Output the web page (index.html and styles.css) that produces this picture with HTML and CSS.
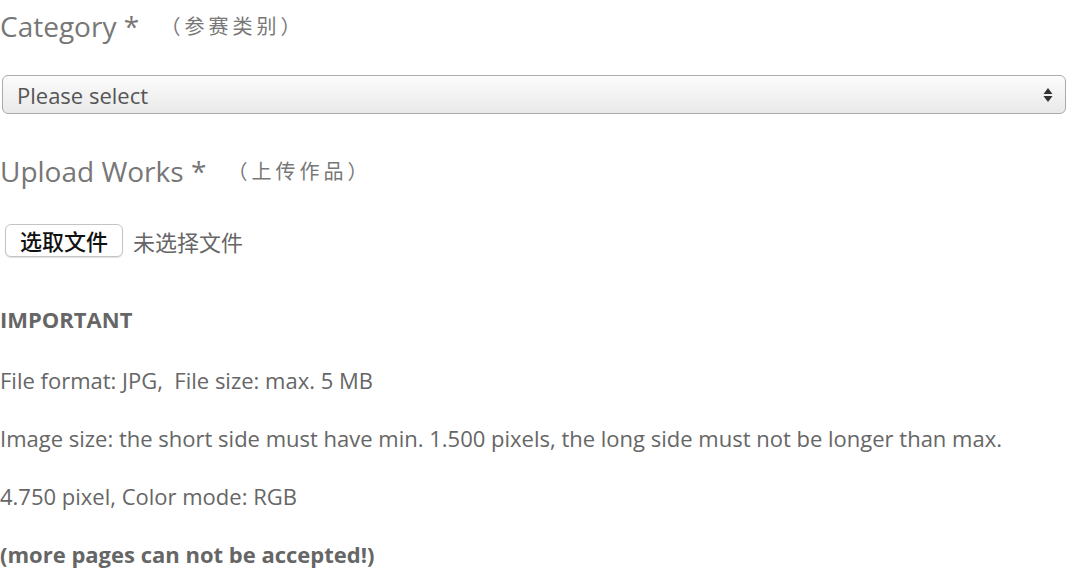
FILE: index.html
```html
<!DOCTYPE html>
<html lang="en">
<head>
<meta charset="utf-8">
<link rel="stylesheet" href="styles.css">
</head>
<body>
<form class="form">
  <div class="label">Category * <span class="cn">（参赛类别）</span></div>
  <div class="select">
    <span class="select-text">Please select</span>
    <svg class="arrows" width="10" height="16" viewBox="0 0 10 16"><path d="M5 1 L9.5 7 H0.5 Z M5 15 L9.5 9 H0.5 Z" fill="#333"/></svg>
  </div>
  <div class="label label-upload">Upload Works * <span class="cn">（上传作品）</span></div>
  <div class="file">
    <span class="file-btn">选取文件</span>
    <span class="file-none">未选择文件</span>
  </div>
  <p class="strong first">IMPORTANT</p>
  <p class="text">File format: JPG,&nbsp; File size: max. 5 MB</p>
  <p class="text">Image size: the short side must have min. 1.500 pixels, the long side must not be longer than max.</p>
  <p class="text">4.750 pixel, Color mode: RGB</p>
  <p class="strong">(more pages can not be accepted!)</p>
</form>
</body>
</html>
```
FILE: styles.css
```css
html, body {
  margin: 0;
  padding: 0;
  background: #fff;
}
body {
  font-family: "Open Sans", "Noto Sans CJK SC", sans-serif;
  color: #666;
}
.form {
  display: flex;
  flex-direction: column;
}
.label {
  font-size: 28px;
  line-height: 40px;
  color: #777;
  padding-top: 6px;
}
.cn {
  font-size: 20px;
  letter-spacing: 4px;
  color: #777;
  margin-left: 14px;
  vertical-align: 3px;
}
.select {
  box-sizing: border-box;
  margin: 28px 14px 0 2px;
  height: 39px;
  border: 1px solid #aaa;
  border-radius: 6px;
  background: linear-gradient(#fcfcfc, #e9e9e9);
  display: flex;
  align-items: center;
  justify-content: space-between;
  padding: 0 12px 0 14px;
  box-shadow: inset 0 1px 0 #fff;
}
.select-text {
  font-size: 22px;
  color: #555;
}
.arrows {
  display: block;
}
.label-upload {
  padding-top: 37px;
}
.file {
  display: flex;
  align-items: center;
  gap: 10px;
  margin-top: 32px;
  padding-left: 5px;
}
.file-btn, .file-none {
  display: block;
  font-family: "Noto Sans CJK SC", sans-serif;
}
.file-btn {
  box-sizing: border-box;
  font-size: 22px;
  font-weight: 500;
  color: #111;
  border: 1px solid #c4c4c4;
  border-radius: 6px;
  background: #fff;
  height: 33px;
  line-height: 31px;
  padding: 0 14px;
  box-shadow: 0 1px 1px rgba(0,0,0,0.12);
}
.file-none {
  font-size: 22px;
  color: #666;
}
.strong {
  font-weight: 700;
  font-size: 22px;
  color: #666;
  margin: 0;
  line-height: 58px;
}
.first {
  margin-top: 33px;
  margin-bottom: 3px;
}
.text {
  font-size: 22px;
  margin: 0;
  line-height: 58px;
}
```
